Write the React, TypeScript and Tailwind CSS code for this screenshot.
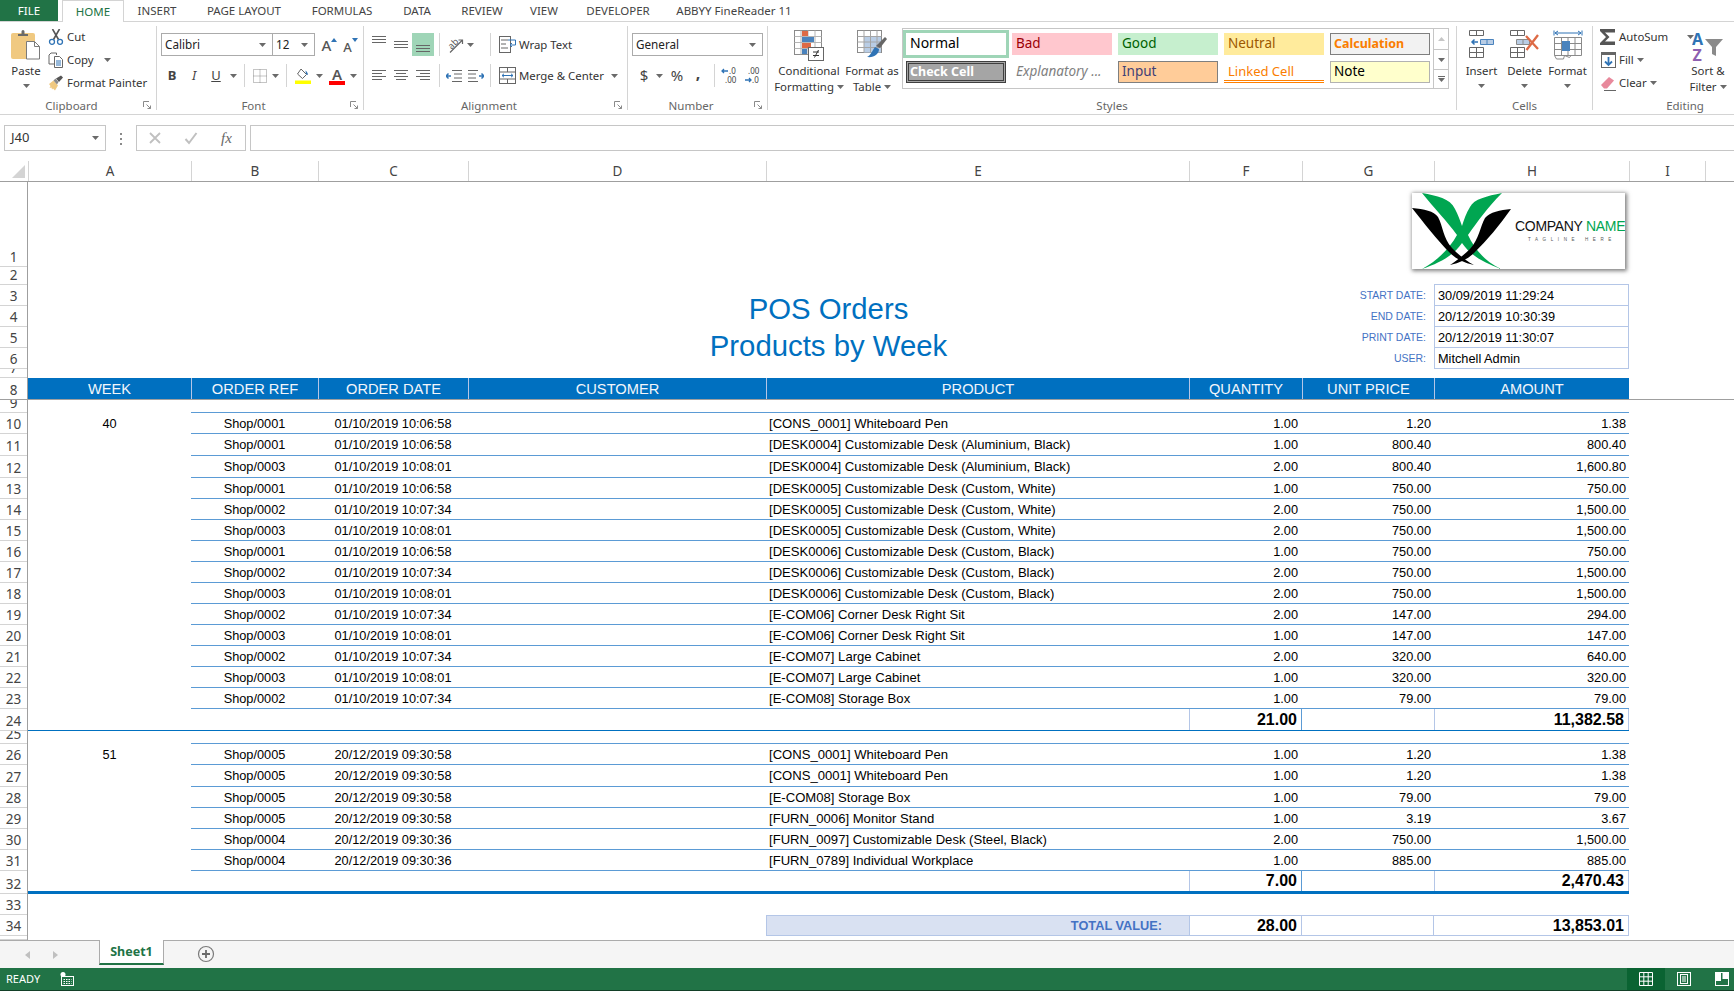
import React from "react";

const COLS = "grid-cols-[163px_127px_150px_298px_423px_113px_132px_195px_76px_1fr]";

const HEIGHT: Record<number, string> = {
  4: "h-[4px]",
  9: "h-[9px]",
  13: "h-[13px]",
  18: "h-[18px]",
  21: "h-[21px]",
  22: "h-[22px]",
  23: "h-[23px]",
  85: "h-[85px]",
};

// row number -> pixel height, read off the screenshot
const ROW_HEIGHTS: [string, number][] = [
  ["1", 85], ["2", 18], ["3", 21], ["4", 21], ["5", 21], ["6", 21], ["7", 9], ["8", 22], ["9", 13],
  ["10", 21], ["11", 22], ["12", 22], ["13", 21], ["14", 21], ["15", 21], ["16", 21], ["17", 21], ["18", 21],
  ["19", 21], ["20", 21], ["21", 21], ["22", 21], ["23", 21], ["24", 22], ["25", 13], ["26", 21], ["27", 22],
  ["28", 21], ["29", 21], ["30", 21], ["31", 21], ["32", 23], ["33", 21], ["34", 21], ["", 4],
];

type Line = { h: number; ref: string; date: string; product: string; qty: string; price: string; amount: string; week?: string };

const WEEK_40: Line[] = [
  { h: 21, week: "40", ref: "Shop/0001", date: "01/10/2019 10:06:58", product: "[CONS_0001] Whiteboard Pen", qty: "1.00", price: "1.20", amount: "1.38" },
  { h: 22, ref: "Shop/0001", date: "01/10/2019 10:06:58", product: "[DESK0004] Customizable Desk (Aluminium, Black)", qty: "1.00", price: "800.40", amount: "800.40" },
  { h: 22, ref: "Shop/0003", date: "01/10/2019 10:08:01", product: "[DESK0004] Customizable Desk (Aluminium, Black)", qty: "2.00", price: "800.40", amount: "1,600.80" },
  { h: 21, ref: "Shop/0001", date: "01/10/2019 10:06:58", product: "[DESK0005] Customizable Desk (Custom, White)", qty: "1.00", price: "750.00", amount: "750.00" },
  { h: 21, ref: "Shop/0002", date: "01/10/2019 10:07:34", product: "[DESK0005] Customizable Desk (Custom, White)", qty: "2.00", price: "750.00", amount: "1,500.00" },
  { h: 21, ref: "Shop/0003", date: "01/10/2019 10:08:01", product: "[DESK0005] Customizable Desk (Custom, White)", qty: "2.00", price: "750.00", amount: "1,500.00" },
  { h: 21, ref: "Shop/0001", date: "01/10/2019 10:06:58", product: "[DESK0006] Customizable Desk (Custom, Black)", qty: "1.00", price: "750.00", amount: "750.00" },
  { h: 21, ref: "Shop/0002", date: "01/10/2019 10:07:34", product: "[DESK0006] Customizable Desk (Custom, Black)", qty: "2.00", price: "750.00", amount: "1,500.00" },
  { h: 21, ref: "Shop/0003", date: "01/10/2019 10:08:01", product: "[DESK0006] Customizable Desk (Custom, Black)", qty: "2.00", price: "750.00", amount: "1,500.00" },
  { h: 21, ref: "Shop/0002", date: "01/10/2019 10:07:34", product: "[E-COM06] Corner Desk Right Sit", qty: "2.00", price: "147.00", amount: "294.00" },
  { h: 21, ref: "Shop/0003", date: "01/10/2019 10:08:01", product: "[E-COM06] Corner Desk Right Sit", qty: "1.00", price: "147.00", amount: "147.00" },
  { h: 21, ref: "Shop/0002", date: "01/10/2019 10:07:34", product: "[E-COM07] Large Cabinet", qty: "2.00", price: "320.00", amount: "640.00" },
  { h: 21, ref: "Shop/0003", date: "01/10/2019 10:08:01", product: "[E-COM07] Large Cabinet", qty: "1.00", price: "320.00", amount: "320.00" },
  { h: 21, ref: "Shop/0002", date: "01/10/2019 10:07:34", product: "[E-COM08] Storage Box", qty: "1.00", price: "79.00", amount: "79.00" },
];

const WEEK_51: Line[] = [
  { h: 21, week: "51", ref: "Shop/0005", date: "20/12/2019 09:30:58", product: "[CONS_0001] Whiteboard Pen", qty: "1.00", price: "1.20", amount: "1.38" },
  { h: 22, ref: "Shop/0005", date: "20/12/2019 09:30:58", product: "[CONS_0001] Whiteboard Pen", qty: "1.00", price: "1.20", amount: "1.38" },
  { h: 21, ref: "Shop/0005", date: "20/12/2019 09:30:58", product: "[E-COM08] Storage Box", qty: "1.00", price: "79.00", amount: "79.00" },
  { h: 21, ref: "Shop/0005", date: "20/12/2019 09:30:58", product: "[FURN_0006] Monitor Stand", qty: "1.00", price: "3.19", amount: "3.67" },
  { h: 21, ref: "Shop/0004", date: "20/12/2019 09:30:36", product: "[FURN_0097] Customizable Desk (Steel, Black)", qty: "2.00", price: "750.00", amount: "1,500.00" },
  { h: 21, ref: "Shop/0004", date: "20/12/2019 09:30:36", product: "[FURN_0789] Individual Workplace", qty: "1.00", price: "885.00", amount: "885.00" },
];

const HEADERS = [
  { label: "WEEK", cls: "col-start-1" },
  { label: "ORDER REF", cls: "col-start-2 border-l" },
  { label: "ORDER DATE", cls: "col-start-3 border-l" },
  { label: "CUSTOMER", cls: "col-start-4 border-l" },
  { label: "PRODUCT", cls: "col-start-5 border-l" },
  { label: "QUANTITY", cls: "col-start-6 border-l" },
  { label: "UNIT PRICE", cls: "col-start-7 border-l" },
  { label: "AMOUNT", cls: "col-start-8 border-l" },
];

const META = [
  { label: "START DATE:", value: "30/09/2019 11:29:24", a: "col-start-7 row-start-3", b: "col-start-8 row-start-3 border-t" },
  { label: "END DATE:", value: "20/12/2019 10:30:39", a: "col-start-7 row-start-4", b: "col-start-8 row-start-4" },
  { label: "PRINT DATE:", value: "20/12/2019 11:30:07", a: "col-start-7 row-start-5", b: "col-start-8 row-start-5" },
  { label: "USER:", value: "Mitchell Admin", a: "col-start-7 row-start-6", b: "col-start-8 row-start-6" },
];

const TABS = [
  { label: "INSERT", w: "w-[66px]" },
  { label: "PAGE LAYOUT", w: "w-[108px]" },
  { label: "FORMULAS", w: "w-[88px]" },
  { label: "DATA", w: "w-[62px]" },
  { label: "REVIEW", w: "w-[68px]" },
  { label: "VIEW", w: "w-[56px]" },
  { label: "DEVELOPER", w: "w-[92px]" },
  { label: "ABBYY FineReader 11", w: "w-[140px]" },
];

const STYLE_CELLS = [
  { label: "Normal", cls: "pl-[4px] pb-[3px] text-[14px] bg-white text-black ring-[3px] ring-[#9fd5b7]" },
  { label: "Bad", cls: "pl-[4px] pb-px text-[13.500px] bg-[#ffc7ce] text-[#9c0006]" },
  { label: "Good", cls: "pl-[4px] pb-px text-[13.500px] bg-[#c6efce] text-[#006100]" },
  { label: "Neutral", cls: "pl-[4px] pb-px text-[13.500px] bg-[#ffeb9c] text-[#9c5700]" },
  { label: "Calculation", cls: "pl-[3px] text-[12.500px] bg-[#f2f2f2] text-[#fa7d00] font-bold border border-[#7f7f7f]" },
  { label: "Check Cell", cls: "pl-[1px] pt-px text-[12.500px] bg-[#a5a5a5] text-white font-bold border-[3px] border-double border-[#3f3f3f]" },
  { label: "Explanatory ...", cls: "pl-[4px] pb-px text-[13.500px] italic text-[#7f7f7f]" },
  { label: "Input", cls: "pl-[3px] pb-px text-[13.500px] bg-[#ffcc99] text-[#3f3f76] border border-[#7f7f7f]" },
  { label: "Linked Cell", cls: "pl-[4px] pt-[1px] text-[13px] text-[#fa7d00] border-b-[3px] border-double border-[#ff8001]" },
  { label: "Note", cls: "pl-[3px] pb-px text-[13.500px] bg-[#ffffcc] text-black border border-[#b2b2b2]" },
];

function Caret({ className = "" }: { className?: string }) {
  return (
    <svg width="7" height="4" viewBox="0 0 7 4" className={`shrink-0 ${className}`}>
      <path d="M0 0h7L3.5 4z" fill="#6a6a6a" />
    </svg>
  );
}

function Launcher() {
  return (
    <svg width="9" height="9" viewBox="0 0 9 9" className="shrink-0 mr-[4px]" fill="none" stroke="#8a8a8a">
      <path d="M.5 6V.5H6" />
      <path d="M3.5 3.5l4 4M7.5 4.5v3h-3" />
    </svg>
  );
}

function Group({ width, label, launcher, children, last }: { width: string; label: string; launcher?: boolean; last?: boolean; children: React.ReactNode }) {
  return (
    <div className={`${width} shrink-0 h-[84px] mt-[4px] flex flex-col ${last ? "" : "border-r border-[#d4d4d4]"}`}>
      <div className="h-[75px] flex">{children}</div>
      <div className="h-[9px] flex items-center">
        <span className="flex-1 text-center text-[11.500px] leading-[11px] text-[#666]">{label}</span>
        {launcher && <Launcher />}
      </div>
    </div>
  );
}

function Combo({ width, label }: { width: string; label: string }) {
  return (
    <div className={`${width} h-[23px] border border-[#ababab] bg-white flex items-center justify-between pl-[3px] pr-[6px] text-[11.700px] text-[#222]`}>
      <span>{label}</span>
      <Caret />
    </div>
  );
}

function Sep() {
  return <div className="w-px h-[23px] bg-[#d4d4d4] shrink-0" />;
}

/* ribbon icons */
function PasteIcon() {
  return (
    <svg width="30" height="30" viewBox="0 0 30 30">
      <rect x="0" y="3" width="24" height="26" rx="2" fill="#f0c981" />
      <path d="M7 6V4h3.5V1.5a1.5 1.5 0 0 1 3 0V4H17v2z" fill="#6a6a6a" />
      <path d="M15.5 11.5h8l5 5v12.5h-13z" fill="#fff" stroke="#7a7a7a" />
      <path d="M23.5 11.5v5h5" fill="none" stroke="#7a7a7a" />
    </svg>
  );
}
function CutIcon() {
  return (
    <svg width="16" height="16" viewBox="0 0 16 16" fill="none">
      <path d="M4.5 0l6 10.5M11.500 0l-6 10.500" stroke="#555" strokeWidth="1.6" />
      <circle cx="4" cy="12.800" r="2.500" stroke="#2f73b5" strokeWidth="1.300" />
      <circle cx="12" cy="12.800" r="2.500" stroke="#2f73b5" strokeWidth="1.300" />
    </svg>
  );
}
function CopyIcon() {
  return (
    <svg width="16" height="16" viewBox="0 0 16 16" fill="none" stroke="#666">
      <path d="M8.500 3V1H3l-2 2v9h5" fill="#fff" />
      <path d="M6.500 4.500h5l3 3v8h-8z" fill="#fff" />
      <path d="M8 9h5M8 11h5M8 13h5" stroke="#2f73b5" />
    </svg>
  );
}
function PainterIcon() {
  return (
    <svg width="16" height="16" viewBox="0 0 16 16">
      <path d="M1 9l4.500-3.500 4.500 5-3 5L5 13.500 4 14.500 3.500 12.500 1.500 13 2.500 11z" fill="#f0c981" />
      <path d="M5.500 5.500l2-2 3 3.500-1.500 2.500z" fill="#8a8a8a" />
      <path d="M8 3.500L13 .5l2 2-4 4.500z" fill="#555" />
    </svg>
  );
}
function GrowIcon({ up }: { up?: boolean }) {
  return (
    <span className="relative w-[21px] h-[18px] flex justify-center">
      <span className={`${up ? "text-[15px]" : "text-[13px] mt-[2px]"} leading-[18px] font-medium text-[#555]`}>A</span>
      <svg width="6" height="4" viewBox="0 0 6 4" className="absolute top-[2px] right-0">
        <path d={up ? "M0 4h6L3 0z" : "M0 0h6L3 4z"} fill="#2f73b5" />
      </svg>
    </span>
  );
}
function BorderIcon() {
  return (
    <svg width="14" height="14" viewBox="0 0 14 14" fill="none" stroke="#8a8a8a" strokeDasharray="1 1">
      <path d="M.5.500h13v13H.500zM7 .5v13M.5 7h13" />
    </svg>
  );
}
function FillIcon() {
  return (
    <svg width="16" height="16" viewBox="0 0 16 16">
      <path d="M6 1l5.500 5.500-4 4L2.500 6z" fill="#fff" stroke="#666" />
      <path d="M10.500 2.500c2 2 2.500 3 2.500 4.500l-2-1z" fill="#2f73b5" />
      <rect x="0" y="12.500" width="16" height="3.500" fill="#ffff00" />
    </svg>
  );
}
function FontColorIcon() {
  return (
    <span className="w-[16px] h-[18px] flex flex-col items-center">
      <span className="text-[15px] leading-[14px] font-semibold text-[#555]">A</span>
      <span className="w-[16px] h-[4px] bg-[#ff0000]" />
    </span>
  );
}
function Lines({ ys, xs }: { ys: number[]; xs: [number, number][] }) {
  return (
    <svg width="16" height="23" viewBox="0 0 16 23" stroke="#666" fill="none">
      {ys.map((y, i) => (
        <path key={y} d={`M${xs[i][0]} ${y + 0.5}H${xs[i][1]}`} />
      ))}
    </svg>
  );
}
const FULL: [number, number] = [1, 15];
function OrientationIcon() {
  return (
    <svg width="18" height="20" viewBox="0 0 18 20">
      <text x="2" y="12" fontSize="9" fill="#555" transform="rotate(-45 7 9)" fontFamily="Noto Sans, sans-serif">ab</text>
      <path d="M4 17.500L16 5.500M12.500 5h4v4" stroke="#666" strokeWidth="1.200" fill="none" />
    </svg>
  );
}
function IndentIcon({ reverse }: { reverse?: boolean }) {
  return (
    <svg width="16" height="14" viewBox="0 0 16 14" fill="none">
      <path d={reverse ? "M6 1.500h10M8 5h8M8 9h8M6 12.500h10" : "M0 1.500h10M0 5h8M0 9h8M0 12.500h10"} stroke="#666" />
      <path d={reverse ? "M5 7H0M2.500 4.500L0 7l2.500 2.500" : "M11 7h5M13.500 4.500L16 7l-2.500 2.500"} stroke="#2f73b5" strokeWidth="1.500" />
    </svg>
  );
}
function WrapIcon() {
  return (
    <svg width="17" height="17" viewBox="0 0 17 17" fill="none">
      <rect x=".5" y=".5" width="11" height="16" fill="#fff" stroke="#666" />
      <path d="M2 4h7M2 8h5M2 12h7" stroke="#666" />
      <path d="M9 4h7.500v5H11M13 7l-2 2 2 2" stroke="#2f73b5" />
    </svg>
  );
}
function MergeIcon() {
  return (
    <svg width="17" height="17" viewBox="0 0 17 17" fill="none">
      <rect x=".5" y=".5" width="16" height="16" stroke="#666" />
      <path d="M.5 5h16M.5 12h16M8.500 .5V5M8.500 12v4.500" stroke="#666" />
      <path d="M3 8.500h11M5 6.800L3 8.500l2 1.700M12 6.800l2 1.700-2 1.700" stroke="#2f73b5" />
    </svg>
  );
}
function DecimalIcon({ increase }: { increase?: boolean }) {
  const font = "Noto Sans, sans-serif";
  return (
    <svg width="20" height="20" viewBox="0 0 20 20">
      <text x={increase ? 9 : 5} y="8" fontSize="8" fill="#444" fontFamily={font}>{increase ? ".0" : ".00"}</text>
      <text x={increase ? 5 : 9} y="17" fontSize="8" fill="#444" fontFamily={font}>{increase ? ".00" : ".0"}</text>
      <path d={increase ? "M8 5H2M4 3L2 5l2 2" : "M2 14h6M6 12l2 2-2 2"} stroke="#2f73b5" strokeWidth="1.300" fill="none" />
    </svg>
  );
}
function ConditionalIcon() {
  return (
    <svg width="30" height="32" viewBox="0 0 30 32" fill="none">
      <rect x=".5" y=".5" width="27" height="24" fill="#fff" stroke="#8a8a8a" />
      <path d="M7 .5v24M14 .5v24M21 .5v24M.5 6.500h27M.5 12.500h27M.5 18.500h27" stroke="#b5b5b5" />
      <rect x="8" y="1" width="6" height="5" fill="#dd6a45" />
      <rect x="8" y="7" width="12" height="5" fill="#4a83bd" />
      <rect x="8" y="13" width="9" height="5" fill="#dd6a45" />
      <rect x="8" y="19" width="5" height="5" fill="#4a83bd" />
      <rect x="14.500" y="17.500" width="15" height="13" fill="#fff" stroke="#666" />
      <path d="M19 22h6M19 25.500h6M24.500 20l-4 7.500" stroke="#333" />
    </svg>
  );
}
function TableIcon() {
  return (
    <svg width="30" height="32" viewBox="0 0 30 32" fill="none">
      <rect x=".5" y=".5" width="24" height="22" fill="#fff" stroke="#8a8a8a" />
      <rect x="7" y="6.500" width="17" height="16" fill="#b9cde5" />
      <path d="M7 .5v22M13.500 .5v22M20 .5v22M.5 6.500h24M.5 12h24M.5 17.500h24" stroke="#a5a5a5" />
      <path d="M28 7l2 2-7 9-4-2z" fill="#666" />
      <path d="M18 17l4 2c0 5-5 9-12 8 4-2 5-6 8-10z" fill="#2f73b5" />
    </svg>
  );
}
function InsertIcon() {
  return (
    <svg width="30" height="30" viewBox="0 0 30 30" fill="none" stroke="#666">
      <path d="M2.500 .5h14v5h-14zM9.500 .5v5M2.500 17.500h14v10h-14zM9.500 17.500v10M2.500 22.500h14" />
      <path d="M13.500 9.500h13v5h-13zM20 9.500v5" fill="#b9cde5" stroke="#4a83bd" />
      <path d="M11 12H5M7.500 9.500L5 12l2.500 2.500" stroke="#2f73b5" strokeWidth="1.500" />
    </svg>
  );
}
function DeleteIcon() {
  return (
    <svg width="30" height="30" viewBox="0 0 30 30" fill="none" stroke="#666">
      <path d="M.5 .5h14v5H.5zM7.500 .5v5M.5 17.500h14v10H.5zM7.500 17.500v10M.5 22.500h14" />
      <path d="M6.500 9.500h13v5h-13zM13 9.500v5" fill="#b9cde5" stroke="#8a8a8a" />
      <path d="M16 6l12 13M28 5L16.500 20" stroke="#dd6a45" strokeWidth="2.300" />
    </svg>
  );
}
function FormatIcon() {
  return (
    <svg width="30" height="31" viewBox="0 0 30 31" fill="none">
      <path d="M1 .5v5M29 .5v5M2 3h26M5 1L2 3l3 2M25 1l3 2-3 2" stroke="#2f73b5" />
      <path d="M1.500 7.500h27v18h-27zM8.500 7.500v18M15 7.500v18M22 7.500v18M1.500 13.500h27M1.500 19.500h27M1.500 25.500l2 3.500h7l1-3.500 5 2 1.500-2" stroke="#8a8a8a" />
      <rect x="9" y="11" width="8" height="10" fill="#4a83bd" />
    </svg>
  );
}
function SigmaIcon() {
  return (
    <svg width="16" height="16" viewBox="0 0 16 16">
      <path d="M0 0h15v3.500H5L9.500 8 5 12.500h10V16H0v-2l6-6-6-6z" fill="#555" />
    </svg>
  );
}
function FillDownIcon() {
  return (
    <svg width="15" height="16" viewBox="0 0 15 16" fill="none">
      <rect x=".5" y=".5" width="14" height="15" stroke="#666" fill="#fff" />
      <rect x="0" y="0" width="15" height="3" fill="#666" />
      <path d="M7.500 5v8M4 9.500l3.500 3.500L11 9.500" stroke="#2f73b5" strokeWidth="1.800" />
    </svg>
  );
}
function EraserIcon() {
  return (
    <svg width="16" height="16" viewBox="0 0 16 16" fill="none">
      <path d="M1 10l8-8 5 3.500-7 8H4z" fill="#e8899c" />
      <path d="M4 15.500h12" stroke="#666" />
    </svg>
  );
}
function SortIcon() {
  return (
    <svg width="32" height="33" viewBox="0 0 32 33">
      <text x="0" y="15" fontSize="16" fontWeight="700" fill="#2f73b5" fontFamily="Noto Sans, sans-serif">A</text>
      <text x="0.500" y="31" fontSize="16" fontWeight="700" fill="#8e5fb0" fontFamily="Noto Sans, sans-serif">Z</text>
      <path d="M13 9h18l-7 8v9l-4-2v-7z" fill="#8a8a8a" />
    </svg>
  );
}

function BigButton({ icon, lines, caretBelow }: { icon: React.ReactNode; lines: string[]; caretBelow?: boolean }) {
  return (
    <div className="h-full flex flex-col items-center text-[11.400px] leading-[16px] text-[#333] whitespace-nowrap">
      <div className="h-[37px] pt-[4px] flex items-start justify-center">{icon}</div>
      {lines.map((line, i) => (
        <div key={line} className="h-[16px] flex items-center gap-[3px]">
          {line}
          {!caretBelow && i === lines.length - 1 && <Caret />}
        </div>
      ))}
      {caretBelow && <Caret className="mt-[5px]" />}
    </div>
  );
}

function SmallRow({ icon, label, caret }: { icon: React.ReactNode; label: string; caret?: React.ReactNode }) {
  return (
    <div className="h-[23px] flex items-center text-[11.400px] text-[#333] whitespace-nowrap">
      <span className="w-[16px] flex justify-center shrink-0">{icon}</span>
      <span className="ml-[3px]">{label}</span>
      {caret}
    </div>
  );
}

function Ribbon() {
  return (
    <div className="h-[93px] shrink-0 flex border-b border-[#d4d4d4] overflow-hidden bg-white">
      <Group width="w-[157px]" label="Clipboard" launcher>
        <div className="ml-[4px] w-[44px]">
          <BigButton icon={<PasteIcon />} lines={["Paste"]} caretBelow />
        </div>
        <div className="flex flex-col -mt-px">
          <SmallRow icon={<CutIcon />} label="Cut" />
          <SmallRow icon={<CopyIcon />} label="Copy" caret={<Caret className="ml-[10px]" />} />
          <SmallRow icon={<PainterIcon />} label="Format Painter" />
        </div>
      </Group>

      <Group width="w-[207px]" label="Font" launcher>
        <div className="pl-[4px] pt-[7px] flex flex-col gap-[8px]">
          <div className="flex items-center">
            <Combo width="w-[112px]" label="Calibri" />
            <Combo width="w-[43px] -ml-px" label="12" />
            <span className="ml-[1px]"><GrowIcon up /></span>
            <GrowIcon />
          </div>
          <div className="flex items-center text-[#444]">
            <span className="w-[22px] text-center text-[13px] font-bold">B</span>
            <span className="w-[22px] text-center text-[13px] italic">I</span>
            <span className="w-[22px] text-center text-[13px] underline">U</span>
            <span className="w-[12px] flex justify-center"><Caret /></span>
            <span className="ml-[5px]"><Sep /></span>
            <span className="ml-[8px]"><BorderIcon /></span>
            <span className="ml-[5px]"><Caret /></span>
            <span className="ml-[7px]"><Sep /></span>
            <span className="ml-[8px]"><FillIcon /></span>
            <span className="ml-[5px]"><Caret /></span>
            <span className="ml-[6px]"><FontColorIcon /></span>
            <span className="ml-[5px]"><Caret /></span>
          </div>
        </div>
      </Group>

      <Group width="w-[264px]" label="Alignment" launcher>
        <div className="pl-[4px] pt-[7px] flex flex-col gap-[8px]">
          <div className="flex items-center h-[23px]">
            <span className="w-[22px] flex justify-center"><Lines ys={[3, 6, 9]} xs={[FULL, FULL, FULL]} /></span>
            <span className="w-[22px] flex justify-center"><Lines ys={[8, 11, 14]} xs={[FULL, FULL, FULL]} /></span>
            <span className="w-[22px] h-[23px] bg-[#9fd5b7] flex justify-center"><Lines ys={[12, 15, 18]} xs={[FULL, FULL, FULL]} /></span>
            <span className="ml-[5px]"><Sep /></span>
            <span className="ml-[6px]"><OrientationIcon /></span>
            <span className="ml-[3px]"><Caret /></span>
            <span className="ml-[16px]"><Sep /></span>
            <span className="ml-[8px]"><WrapIcon /></span>
            <span className="ml-[3px] text-[11.400px] text-[#333]">Wrap Text</span>
          </div>
          <div className="flex items-center h-[23px]">
            <span className="w-[22px] flex justify-center"><Lines ys={[6, 9, 12, 15]} xs={[FULL, [1, 11], FULL, [1, 11]]} /></span>
            <span className="w-[22px] flex justify-center"><Lines ys={[6, 9, 12, 15]} xs={[FULL, [3, 13], FULL, [3, 13]]} /></span>
            <span className="w-[22px] flex justify-center"><Lines ys={[6, 9, 12, 15]} xs={[FULL, [5, 15], FULL, [5, 15]]} /></span>
            <span className="ml-[5px]"><Sep /></span>
            <span className="ml-[6px]"><IndentIcon reverse /></span>
            <span className="ml-[6px]"><IndentIcon /></span>
            <span className="ml-[6px]"><Sep /></span>
            <span className="ml-[8px]"><MergeIcon /></span>
            <span className="ml-[3px] text-[11.400px] text-[#333] whitespace-nowrap">Merge &amp; Center</span>
            <Caret className="ml-[7px]" />
          </div>
        </div>
      </Group>

      <Group width="w-[140px]" label="Number" launcher>
        <div className="pl-[4px] pt-[7px] flex flex-col gap-[8px]">
          <Combo width="w-[131px]" label="General" />
          <div className="flex items-center h-[23px] text-[#444]">
            <span className="ml-[6px] w-[12px] text-center text-[15px]">$</span>
            <Caret className="ml-[6px]" />
            <span className="ml-[5px] w-[18px] text-center text-[15px]">%</span>
            <span className="ml-[8px] w-[8px] text-center text-[16px] leading-[16px] font-bold mb-[6px]">,</span>
            <span className="ml-[12px]"><Sep /></span>
            <span className="ml-[5px]"><DecimalIcon increase /></span>
            <span className="ml-[3px]"><DecimalIcon /></span>
          </div>
        </div>
      </Group>

      <Group width="w-[689px]" label="Styles">
        <div className="ml-[8px] w-[66px]">
          <BigButton icon={<ConditionalIcon />} lines={["Conditional", "Formatting"]} />
        </div>
        <div className="w-[60px]">
          <BigButton icon={<TableIcon />} lines={["Format as", "Table"]} />
        </div>
        <div className="mt-[2px] w-[547px] h-[61px] border border-[#c6c6c6] flex justify-between">
          <div className="pl-[3px] pt-[4px] grid grid-cols-[100px_100px_100px_100px_100px] gap-x-[6px] gap-y-[6px] auto-rows-[22px]">
            {STYLE_CELLS.map((s) => (
              <div key={s.label} className={`flex items-center leading-none box-border ${s.cls}`}>
                {s.label}
              </div>
            ))}
          </div>
          <div className="w-[15px] flex flex-col border-l border-[#c6c6c6]">
            <div className="h-[21px] flex items-center justify-center border-b border-[#c6c6c6]">
              <svg width="7" height="4" viewBox="0 0 7 4"><path d="M0 4h7L3.500 0z" fill="#c6c6c6" /></svg>
            </div>
            <div className="h-[20px] flex items-center justify-center border-b border-[#c6c6c6]"><Caret /></div>
            <div className="flex-1 flex flex-col items-center justify-center gap-[1px]">
              <span className="w-[7px] h-px bg-[#6a6a6a]" />
              <Caret />
            </div>
          </div>
        </div>
      </Group>

      <Group width="w-[136px]" label="Cells">
        <div className="ml-[3px] w-[43px]"><BigButton icon={<InsertIcon />} lines={["Insert"]} caretBelow /></div>
        <div className="w-[43px]"><BigButton icon={<DeleteIcon />} lines={["Delete"]} caretBelow /></div>
        <div className="w-[43px]"><BigButton icon={<FormatIcon />} lines={["Format"]} caretBelow /></div>
      </Group>

      <Group width="w-[184px]" label="Editing" last>
        <div className="ml-[7px] -mt-px w-[90px] flex flex-col">
          <SmallRow icon={<SigmaIcon />} label="AutoSum" caret={<Caret className="ml-[19px]" />} />
          <SmallRow icon={<FillDownIcon />} label="Fill" caret={<Caret className="ml-[3px]" />} />
          <SmallRow icon={<EraserIcon />} label="Clear" caret={<Caret className="ml-[3px]" />} />
        </div>
        <div className="w-[40px] ml-[-2px]">
          <BigButton icon={<SortIcon />} lines={["Sort &", "Filter"]} />
        </div>
      </Group>
    </div>
  );
}

function FormulaBar() {
  return (
    <div className="h-[46px] shrink-0 pt-[10px] flex items-start bg-white">
      <div className="ml-[4px] w-[102px] h-[26px] border border-[#c6c6c6] flex items-center justify-between pl-[6px] pr-[6px] text-[13px] text-[#333]">
        J40
        <Caret />
      </div>
      <div className="ml-[14px] mt-[8px] flex flex-col gap-[3px]">
        <span className="w-[2px] h-[2px] bg-[#8a8a8a]" />
        <span className="w-[2px] h-[2px] bg-[#8a8a8a]" />
        <span className="w-[2px] h-[2px] bg-[#8a8a8a]" />
      </div>
      <div className="ml-[14px] w-[110px] h-[26px] border border-[#c6c6c6] flex items-center text-[#b5b5b5]">
        <svg width="14" height="14" viewBox="0 0 14 14" className="ml-[11px]" fill="none" stroke="#c0c0c0" strokeWidth="1.800">
          <path d="M2 2l10 10M12 2L2 12" />
        </svg>
        <svg width="14" height="14" viewBox="0 0 14 14" className="ml-[22px]" fill="none" stroke="#c0c0c0" strokeWidth="2">
          <path d="M1.500 8l3.500 4 7.500-10" />
        </svg>
        <span className="ml-[23px] text-[15px] italic font-['Liberation_Serif'] text-[#666]">fx</span>
      </div>
      <div className="ml-[4px] flex-1 h-[26px] border border-[#c6c6c6] border-r-0" />
    </div>
  );
}

function ColumnHeaders() {
  const letters = ["A", "B", "C", "D", "E", "F", "G", "H", "I", ""];
  return (
    <div className="h-[21px] shrink-0 flex border-b border-[#9f9f9f] bg-white">
      <div className="w-[28px] shrink-0 flex items-end justify-end pr-[3px] pb-[3px]">
        <div className="w-0 h-0 border-l-[13px] border-l-transparent border-b-[13px] border-b-[#d4d4d4]" />
      </div>
      <div className={`flex-1 grid ${COLS}`}>
        {letters.map((c, i) => (
          <div key={i} className="border-l border-[#d4d4d4] flex items-center justify-center text-[13.500px] text-[#444]">
            {c}
          </div>
        ))}
      </div>
    </div>
  );
}

function RowHeaders() {
  return (
    <div className="w-[28px] shrink-0 border-r border-[#9f9f9f] flex flex-col">
      {ROW_HEIGHTS.map(([n, h], i) => (
        <div
          key={i}
          className={`${HEIGHT[h]} shrink-0 box-border border-b ${n === "8" ? "border-[#9f9f9f]" : "border-[#d4d4d4]"} overflow-hidden flex items-end justify-center text-[13.500px] leading-[17px] text-[#444] font-['Noto_Sans']`}
        >
          {n}
        </div>
      ))}
    </div>
  );
}

function Logo() {
  return (
    <div className="col-start-7 col-end-9 row-start-1 row-end-3 justify-self-end self-start mt-[11px] mr-[4px] w-[213px] h-[76px] bg-white shadow-[1px_1px_4px_1px_rgba(0,0,0,0.5)] flex overflow-hidden">
      <svg width="100" height="76" viewBox="0 0 100 76" className="shrink-0">
        <path
          d="M10 0C25 3 38 5 43 16C46 22 48 27 50 33C52 27 54 20 58 14C62 6 75 3 90 0C75 15 66 28 56 42C62 55 72 68 89 76C72 70 58 62 50 50C42 62 28 70 10 76C25 68 38 55 45 42C35 28 22 15 10 0Z"
          fill="#00a651"
        />
        <path d="M0 15C12 16 22 18 26 24C31 33 31 45 40 55C47 62 54 68 62 72C52 70 44 66 38 60C25 47 12 30 0 15Z" fill="#000" />
        <path d="M99 16C88 17 78 19 73 25C68 34 67 46 58 56C52 62 44 68 38 72C48 70 56 66 62 60C75 47 88 32 99 16Z" fill="#000" />
      </svg>
      <div className="pl-[3px] pt-[24px] flex flex-col items-start whitespace-nowrap">
        <span className="text-[14px] leading-[18px] tracking-[-0.3px] text-[#111]">
          COMPANY <span className="text-[#00a651]">NAME</span>
        </span>
        <span className="ml-[13px] mt-[2px] text-[4.500px] leading-[6px] tracking-[4.600px] text-[#555]">TAGLINE HERE</span>
      </div>
    </div>
  );
}

function TopBlock() {
  return (
    <div className={`grid ${COLS} grid-rows-[85px_17px_22px_21px_21px_21px_9px_22px] shrink-0`}>
      <Logo />
      <div className="col-start-1 col-end-9 row-start-3 row-end-5 flex items-center justify-center pt-[7px] text-[29.330px] leading-[36px] text-[#0070c0]">
        POS Orders
      </div>
      <div className="col-start-1 col-end-9 row-start-5 row-end-7 flex items-center justify-center pb-[5px] text-[29.330px] leading-[36px] text-[#0070c0]">
        Products by Week
      </div>
      {META.map((m) => (
        <React.Fragment key={m.label}>
          <div className={`${m.a} z-10 flex items-center justify-end pt-px pr-[8px] text-[10.500px] text-[#4472c4]`}>{m.label}</div>
          <div className={`${m.b} z-10 box-border border-b border-x border-[#b4c6e7] flex items-center pl-[3px] pt-px text-[12.750px] text-black`}>{m.value}</div>
        </React.Fragment>
      ))}
      <div className="col-start-1 col-end-11 row-start-8 border-b border-[#9f9f9f]" />
      {HEADERS.map((h) => (
        <div
          key={h.label}
          className={`${h.cls} row-start-8 h-[21px] bg-[#0070c0] border-[#b4c6e7] flex items-center justify-center pt-px text-[14.670px] leading-[18px] text-[#f2f6fb]`}
        >
          {h.label}
        </div>
      ))}
    </div>
  );
}

function DataRow({ line }: { line: Line }) {
  const cell = "border-b border-[#5b9bd5] flex items-center pt-px";
  return (
    <div className={`grid ${COLS} ${HEIGHT[line.h]} shrink-0 box-border text-[12.750px] leading-[16px] text-black`}>
      <div className="flex items-center justify-center pt-px">{line.week}</div>
      <div className={`${cell} justify-center`}>{line.ref}</div>
      <div className={`${cell} justify-center`}>{line.date}</div>
      <div className={cell} />
      <div className={`${cell} pl-[3px] text-[13.100px]`}>{line.product}</div>
      <div className={`${cell} justify-end pr-[4px]`}>{line.qty}</div>
      <div className={`${cell} justify-end pr-[3px]`}>{line.price}</div>
      <div className={`${cell} justify-end pr-[3px]`}>{line.amount}</div>
    </div>
  );
}

function SpacerRow() {
  return (
    <div className={`grid ${COLS} h-[13px] shrink-0`}>
      <div />
      <div className="col-span-7 border-b border-[#5b9bd5]" />
    </div>
  );
}

function TotalRow({ qty, amount, height, line }: { qty: string; amount: string; height: string; line: string }) {
  const v = "flex items-center justify-end pr-[4px] text-[16px] leading-[18px] font-bold text-black border-[#b4c6e7]";
  return (
    <div className={`grid ${COLS} ${height} shrink-0`}>
      <div className={`col-span-8 grid grid-cols-[1161px_112px_133px_195px] ${line} border-[#0070c0]`}>
        <div />
        <div className={`${v} border-l`}>{qty}</div>
        <div className={`${v} border-l border-l-[#5b9bd5]`} />
        <div className={`${v} border-x`}>{amount}</div>
      </div>
    </div>
  );
}

function GrandTotal() {
  const v = "flex items-center justify-end pr-[4px] text-[16px] leading-[18px] font-bold text-black border-y border-r border-[#b4c6e7]";
  return (
    <div className={`grid ${COLS} h-[21px] shrink-0`}>
      <div className="col-start-5 bg-[#d9e1f2] border border-r-0 border-[#b4c6e7] flex items-center justify-end pr-[27px] text-[12.750px] leading-[16px] font-bold text-[#4472c4]">
        TOTAL VALUE:
      </div>
      <div className={`${v} border-l`}>28.00</div>
      <div className={v} />
      <div className={v}>13,853.01</div>
    </div>
  );
}

function Sheet() {
  return (
    <div className="h-[758px] shrink-0 flex overflow-hidden bg-white font-['Liberation_Sans']">
      <RowHeaders />
      <div className="flex-1 flex flex-col">
        <TopBlock />
        <SpacerRow />
        {WEEK_40.map((l, i) => <DataRow key={i} line={l} />)}
        <TotalRow qty="21.00" amount="11,382.58" height="h-[22px]" line="border-b" />
        <SpacerRow />
        {WEEK_51.map((l, i) => <DataRow key={i} line={l} />)}
        <TotalRow qty="7.00" amount="2,470.43" height="h-[23px]" line="border-b-[3px]" />
        <div className="h-[21px] shrink-0" />
        <GrandTotal />
      </div>
    </div>
  );
}

function SheetTabs() {
  return (
    <div className="h-[28px] shrink-0 bg-[#f5f5f5] border-t border-[#ababab] flex font-['Noto_Sans']">
      <svg width="5" height="8" viewBox="0 0 5 8" className="ml-[25px] mt-[10px]"><path d="M5 0v8L0 4z" fill="#c0c0c0" /></svg>
      <svg width="5" height="8" viewBox="0 0 5 8" className="ml-[23px] mt-[10px]"><path d="M0 0v8l5-4z" fill="#c0c0c0" /></svg>
      <div className="ml-[41px] -mt-px w-[65px] h-[25px] box-border bg-white border-x border-[#ababab] border-b-2 border-b-[#217346] flex items-center justify-center pt-[2px] text-[12.500px] font-bold text-[#217346]">
        Sheet1
      </div>
      <svg width="18" height="18" viewBox="0 0 18 18" className="ml-[33px] mt-[4px]" fill="none">
        <circle cx="9" cy="9" r="7.500" stroke="#7a7a7a" strokeWidth="1.200" />
        <path d="M9 5v8M5 9h8" stroke="#6a6a6a" strokeWidth="1.800" />
      </svg>
    </div>
  );
}

function StatusBar() {
  return (
    <div className="h-[23px] shrink-0 bg-[#217346] border-b border-[#123f27] flex items-center font-['Noto_Sans'] text-white">
      <span className="ml-[6px] text-[11px]">READY</span>
      <svg width="14" height="14" viewBox="0 0 14 14" className="ml-[20px]" fill="none">
        <circle cx="3" cy="2.500" r="2.500" fill="#fff" />
        <rect x="1.500" y="4.500" width="12" height="9" fill="#217346" stroke="#fff" />
        <path d="M3.500 7.500h8M3.500 9.500h8M3.500 11.500h8" stroke="#fff" strokeDasharray="1.500 1" />
      </svg>
      <div className="ml-auto flex h-full items-center">
        <div className="w-[38px] h-full bg-[#0a6332] flex items-center justify-center">
          <svg width="14" height="14" viewBox="0 0 14 14" fill="none" stroke="#fff"><path d="M.5.500h13v13H.500zM.5 4.800h13M.5 9.200h13M4.800.500v13M9.200.500v13" /></svg>
        </div>
        <div className="w-[38px] flex justify-center">
          <svg width="14" height="14" viewBox="0 0 14 14" fill="none" stroke="#fff"><rect x=".5" y=".5" width="13" height="13" /><rect x="3.500" y="2.500" width="7" height="9" /><path d="M5 5h4M5 7h4M5 9h4" /></svg>
        </div>
        <div className="w-[31px] flex justify-start pl-[12px]">
          <svg width="14" height="14" viewBox="0 0 14 14" fill="none"><rect x=".5" y=".5" width="13" height="13" stroke="#fff" /><rect x="1" y="1" width="5" height="8" fill="#fff" /><rect x="7.500" y="1" width="5.500" height="6" fill="#fff" /></svg>
        </div>
      </div>
    </div>
  );
}

export default function App() {
  return (
    <div className="w-[1734px] h-[991px] overflow-hidden flex flex-col bg-white font-['Noto_Sans',sans-serif]">
      <div className="h-[22px] shrink-0 flex border-b border-[#d4d4d4] text-[11.500px] text-[#444]">
        <div className="w-[58px] bg-[#217346] text-white flex items-center justify-center">FILE</div>
        <div className="ml-[4px] w-[62px] h-[22px] bg-white border-x border-t border-[#d4d4d4] flex items-center justify-center text-[#217346]">HOME</div>
        {TABS.map((t) => (
          <div key={t.label} className={`${t.w} flex items-center justify-center whitespace-nowrap`}>{t.label}</div>
        ))}
      </div>
      <Ribbon />
      <FormulaBar />
      <ColumnHeaders />
      <Sheet />
      <SheetTabs />
      <StatusBar />
    </div>
  );
}
